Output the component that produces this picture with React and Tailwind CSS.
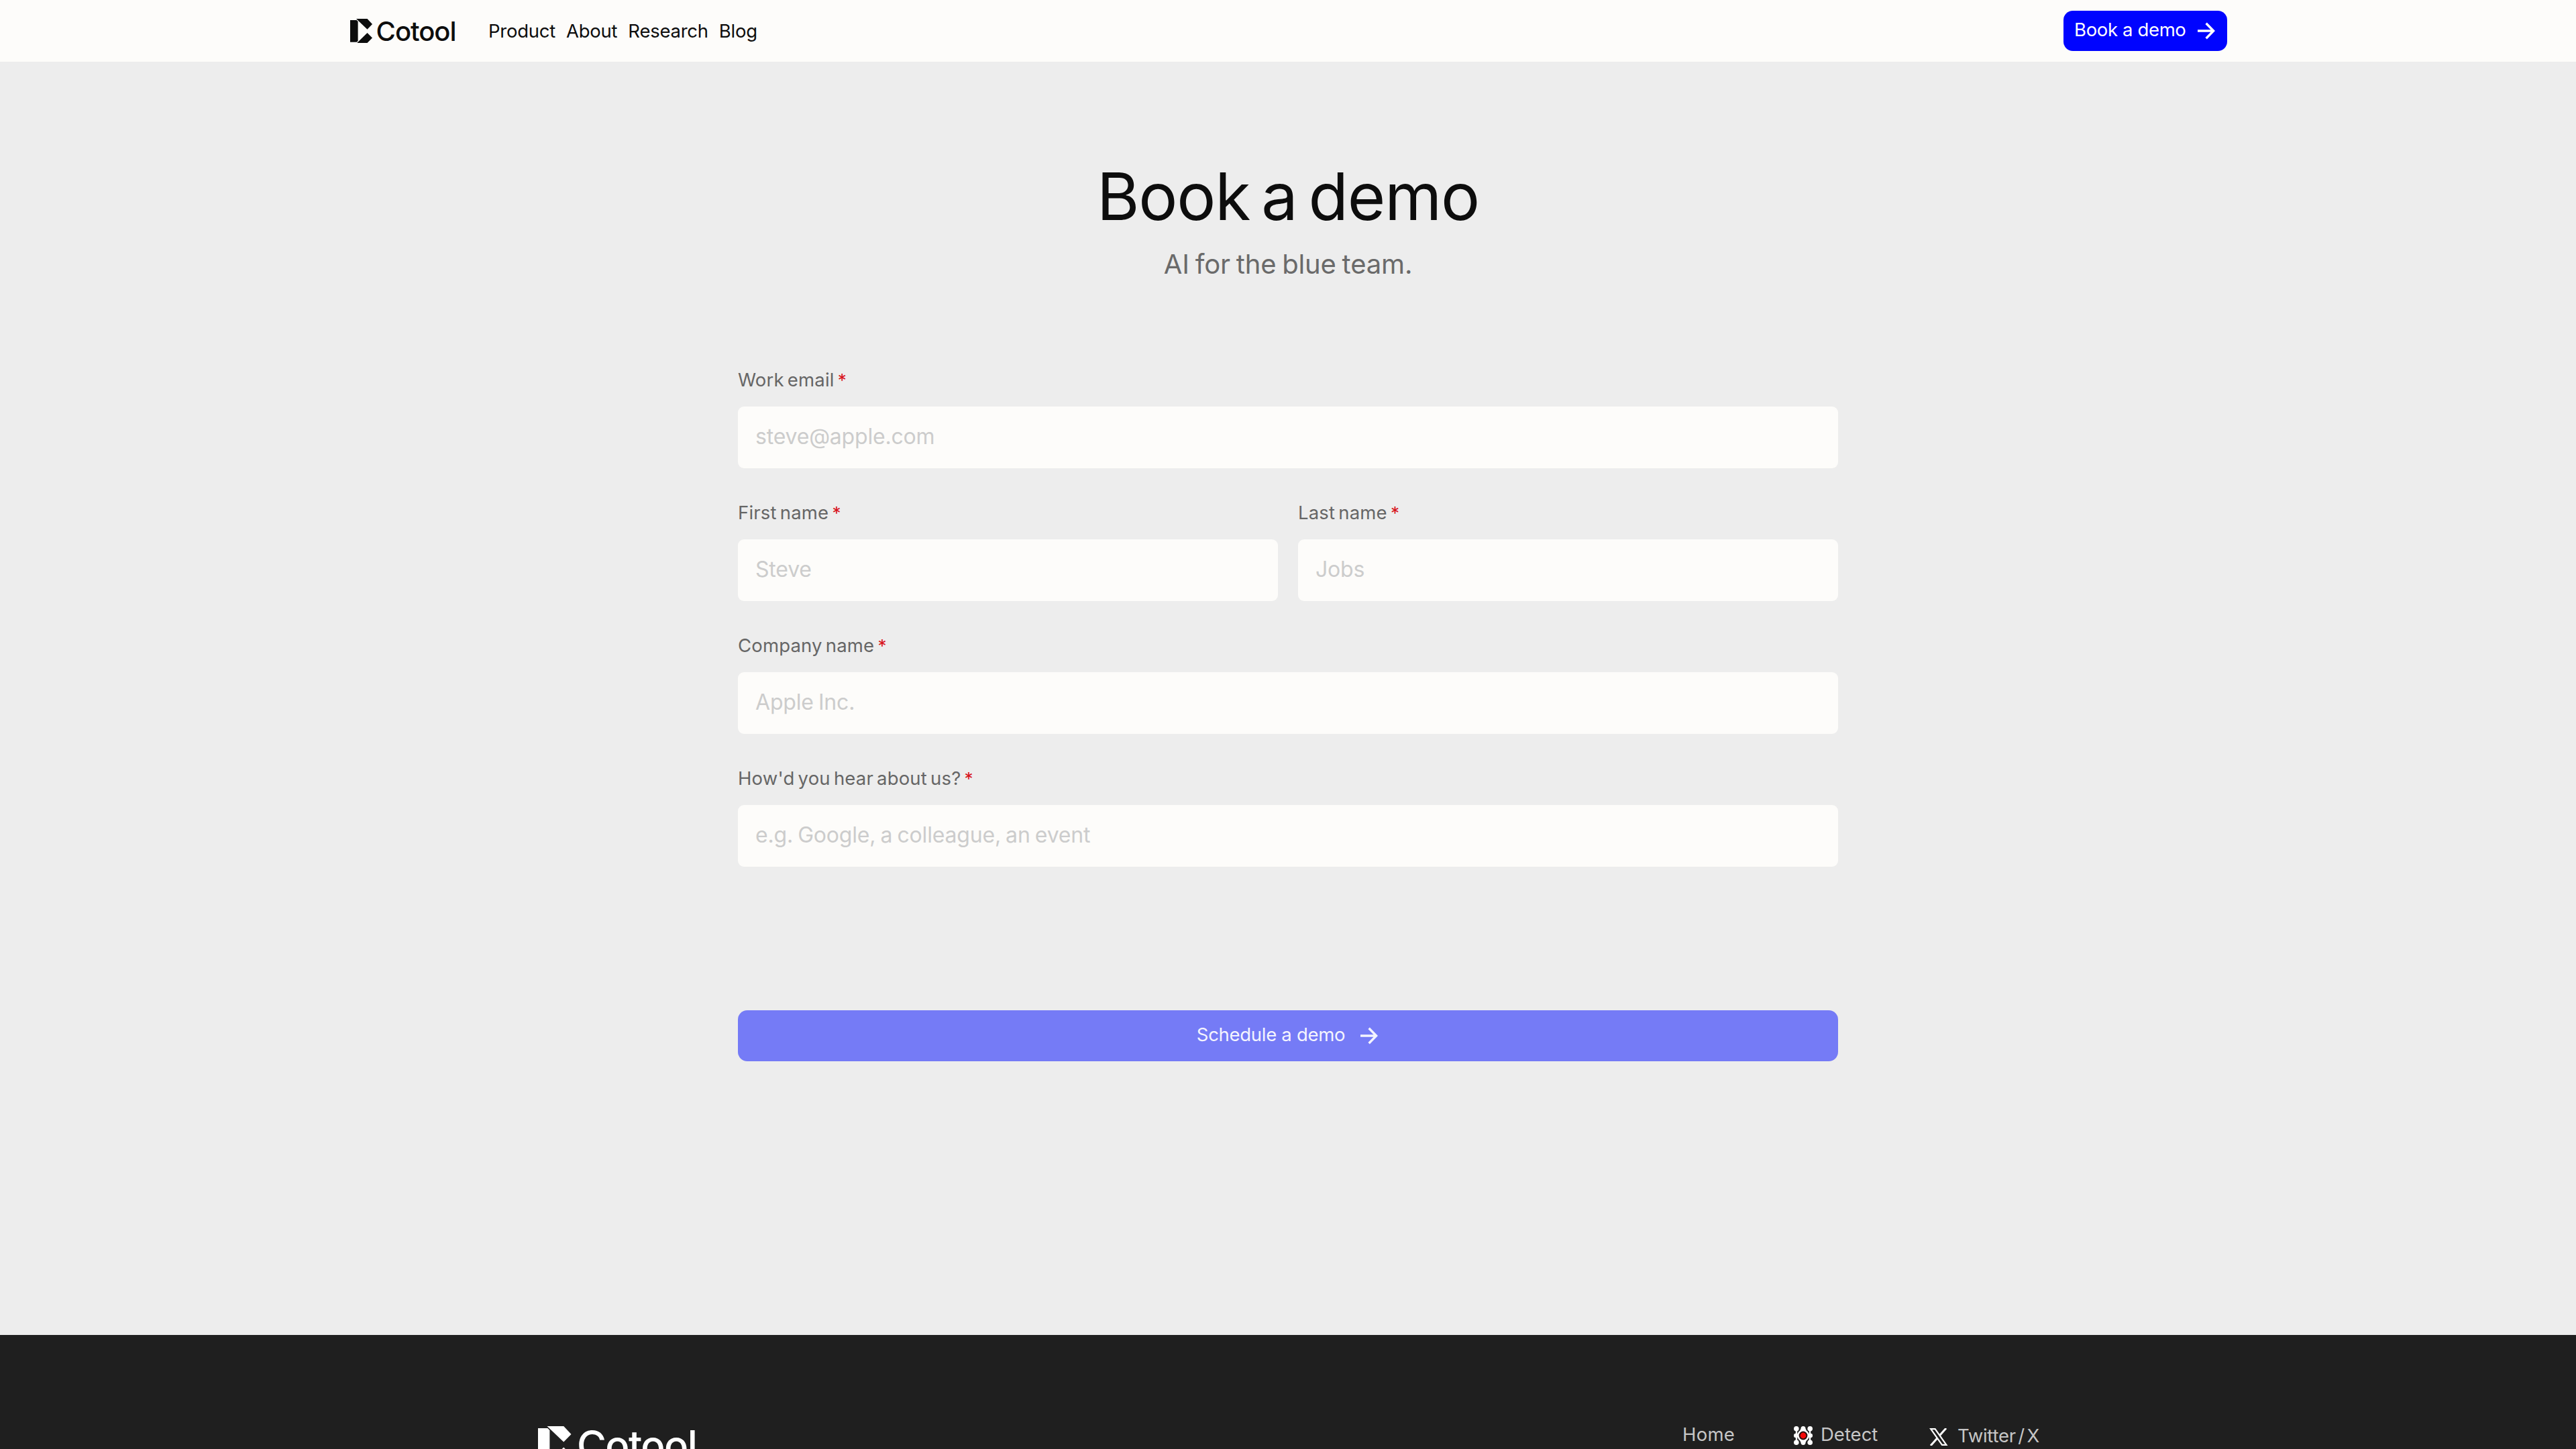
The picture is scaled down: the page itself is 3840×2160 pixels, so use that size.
import React from 'react';

const NAV_LINKS = ['Product', 'About', 'Research', 'Blog'];

function Logo({ className }) {
  return (
    <div className={`flex items-center font-medium ${className}`}>
      <svg viewBox="0 0 33 36" className="h-[0.9em] w-[0.825em] shrink-0" fill="currentColor">
        <path d="M0 2H9.6L11.6 4V33L9.8 34.8H0Z" />
        <path d="M9 0H25.5L33 8L25.5 15.7Z" />
        <path d="M25.5 21L33 28.5L25.5 36H10.2Z" />
      </svg>
      <span className="ml-[0.14em] mt-[0.03em] leading-none tracking-[-0.026em]">Cotool</span>
    </div>
  );
}

function ArrowIcon() {
  return (
    <svg viewBox="0 0 26 26" className="h-[26px] w-[26px]" fill="none" stroke="currentColor" strokeWidth="3.4">
      <path d="M0 13H23M12.6 1.8L23.6 13L12.6 24.2" />
    </svg>
  );
}

function DetectIcon() {
  return (
    <svg viewBox="0 0 28 28" className="h-7 w-7" fill="#fff">
      <path d="M4 4V24M24 4V24" stroke="#fff" strokeWidth="2.4" />
      <circle cx="3.8" cy="3.8" r="3.8" />
      <circle cx="24.2" cy="3.8" r="3.8" />
      <circle cx="3.8" cy="24.2" r="3.8" />
      <circle cx="24.2" cy="24.2" r="3.8" />
      <circle cx="3.2" cy="14" r="3.2" />
      <circle cx="24.8" cy="14" r="3.2" />
      <circle cx="14" cy="14" r="9" />
      <path d="M10.500 3.500a3.500 3.500 0 0 1 7 0L19 7H9ZM10.500 24.500a3.500 3.500 0 0 0 7 0L19 21H9Z" />
      <circle cx="14" cy="14" r="6.400" fill="#2a0f0f" />
      <circle cx="14" cy="14" r="4.400" fill="#f40808" />
    </svg>
  );
}

function XIcon() {
  return (
    <svg viewBox="0 0 28 26" className="h-[26px] w-7" fill="none">
      <path d="M25 0L2 26" stroke="#fff" strokeWidth="3" />
      <path d="M2.200 1.100H8.600L25.400 24.900H19Z" fill="#1f1f1f" stroke="#fff" strokeWidth="2.200" />
    </svg>
  );
}

function Field({ label, placeholder }) {
  return (
    <label className="flex flex-1 flex-col gap-[23px]">
      <span className="h-[34px] text-[27.5px] leading-[34px] tracking-[0.006em] text-[#666666] [word-spacing:-0.1em]">
        {label} <span className="text-[26px] text-[#d8141c]">*</span>
      </span>
      <input
        placeholder={placeholder}
        className="h-[92px] w-full rounded-[9px] bg-[#fdfcfa] px-[26px] pb-1 text-[32px] tracking-[-0.006em] outline-none [word-spacing:-0.05em] placeholder:text-[#cccccc]"
      />
    </label>
  );
}

export default function App() {
  return (
    <div className="flex h-[2160px] w-[3840px] flex-col overflow-hidden bg-[#ededed] font-['Inter','Liberation_Sans',sans-serif] font-[430] text-[#0d0d0d] [word-spacing:-0.08em]">
      {/* Header */}
      <header className="flex h-[92px] shrink-0 items-center bg-[#fdfcfa] pl-[522px] pr-[520px]">
        <Logo className="w-[206px] text-[40px]" />
        <nav className="flex flex-1 gap-4 text-[27.5px] leading-9 tracking-[-0.009em]">
          {NAV_LINKS.map(link => (
            <a key={link} href="#">{link}</a>
          ))}
        </nav>
        <button className="flex h-[60px] w-[244px] items-center justify-between rounded-[14px] bg-[#0004ff] pb-px pl-4 pr-[18px] text-[27.5px] text-white">
          <span className="pb-[3px] leading-9 tracking-[-0.013em]">Book a demo</span>
          <ArrowIcon />
        </button>
      </header>

      {/* Form */}
      <main className="mx-auto flex h-[1898px] w-[1640px] shrink-0 flex-col pt-[153px] tracking-[-0.005em]">
        <h1 className="text-center text-[97px] leading-[96px] tracking-[-0.012em] [word-spacing:-0.095em]">Book a demo</h1>
        <p className="mt-[29px] text-center text-[40px] leading-[48px] tracking-[-0.004em] text-[#6a6a6a] [word-spacing:-0.055em]">AI for the blue team.</p>
        <form className="mt-[131px] flex flex-col gap-[49px]">
          <Field label="Work email" placeholder="steve@apple.com" />
          <div className="flex gap-[30px]">
            <Field label="First name" placeholder="Steve" />
            <Field label="Last name" placeholder="Jobs" />
          </div>
          <Field label="Company name" placeholder="Apple Inc." />
          <Field label="How'd you hear about us?" placeholder="e.g. Google, a colleague, an event" />
          <button
            type="button"
            className="mt-[165px] flex h-[76px] items-center justify-center gap-[23px] rounded-[14px] bg-[#757bf6] pb-px pr-0.5 text-[27.5px] tracking-[-0.011em] text-[#f4f4fe]"
          >
            <span className="pb-[3px] leading-9">Schedule a demo</span>
            <ArrowIcon />
          </button>
        </form>
      </main>

      {/* Footer */}
      <footer className="flex h-[300px] shrink-0 justify-between bg-[#1f1f1f] pl-[802px] pr-[800px] pt-[130px]">
        <Logo className="mt-1.5 h-[54px] text-[60px] text-white" />
        <div className="flex text-[27.5px] leading-9 text-[#c6c6c6]">
          <a href="#" className="w-[166px] tracking-[0.01em]">Home</a>
          <a href="#" className="flex h-9 w-[202px] gap-3">
            <span className="pt-1.5"><DetectIcon /></span>
            Detect
          </a>
          <a href="#" className="mt-0.5 flex h-9 w-[164px] gap-3.5">
            <span className="pt-[7px]"><XIcon /></span>
            <span className="whitespace-nowrap tracking-[-0.01em] [word-spacing:-0.14em]">Twitter / X</span>
          </a>
        </div>
      </footer>
    </div>
  );
}
